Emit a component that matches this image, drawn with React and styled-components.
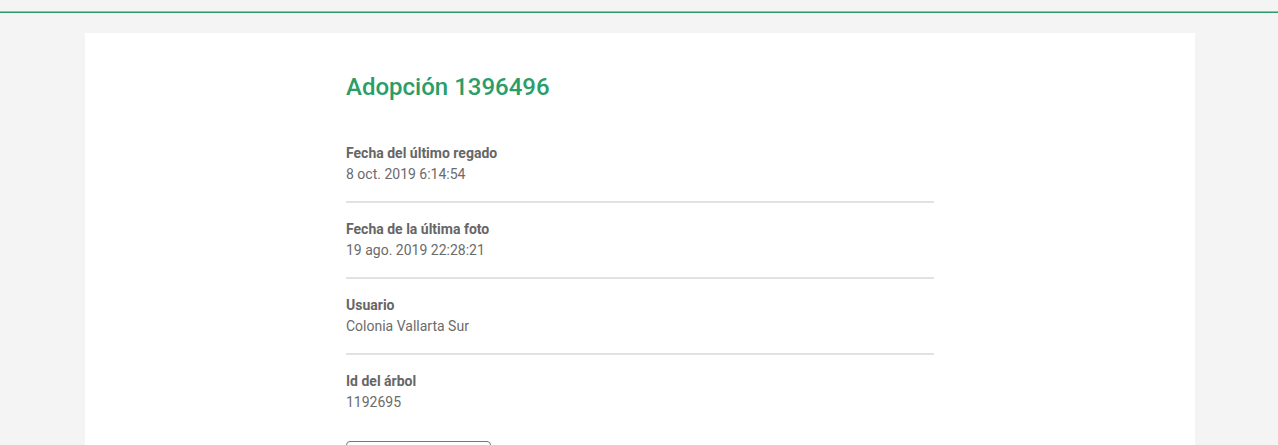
import styled, { createGlobalStyle } from 'styled-components';

const GlobalStyle = createGlobalStyle`
  body {
    margin: 0;
    background: #f4f4f4;
    font-family: Roboto, "Liberation Sans", sans-serif;
  }
`;

const TopBar = styled.div.attrs({ className: 'TopBar' })`
  height: 11px;
  border-bottom: 1px solid #9fb8ab;
  box-shadow: 0 1px 0 #2a9d6a;
  margin-bottom: 21px;
`;

const Page = styled.div.attrs({ className: 'Page' })`
  padding-left: 2px;
`;

const Card = styled.main.attrs({ className: 'Card' })`
  width: 1110px;
  margin: 0 auto;
  background: #ffffff;
  padding: 40px 0 0;
  min-height: 500px;
`;

const Content = styled.div.attrs({ className: 'Content' })`
  width: 588px;
  margin: 0 auto;
`;

const Title = styled.h1.attrs({ className: 'Title' })`
  margin: 0 0 25px;
  font-size: 24px;
  line-height: 29px;
  font-weight: 500;
  color: #2a9d6a;
`;

const Item = styled.div.attrs({ className: 'Item' })`
  padding: 16px 0 17px;
  border-bottom: ${({ $last }) => ($last ? 'none' : '2px solid #e2e2e2')};
`;

const Label = styled.div.attrs({ className: 'Label' })`
  font-size: 14px;
  line-height: 20px;
  font-weight: 700;
  color: #666666;
`;

const Value = styled.div.attrs({ className: 'Value' })`
  margin-top: 1px;
  font-size: 14px;
  line-height: 20px;
  color: #6b6b6b;
`;

const Button = styled.button.attrs({ className: 'Button' })`
  margin-top: 12px;
  width: 145px;
  height: 36px;
  background: #fff;
  border: 1px solid #777;
  border-radius: 4px;
  font-family: inherit;
  font-size: 14px;
  color: #555;
`;

const rows = [
  { label: 'Fecha del último regado', value: '8 oct. 2019 6:14:54' },
  { label: 'Fecha de la última foto', value: '19 ago. 2019 22:28:21' },
  { label: 'Usuario', value: 'Colonia Vallarta Sur' },
  { label: 'Id del árbol', value: '1192695' },
];

export default function App() {
  return (
    <>
      <GlobalStyle />
      <TopBar />
      <Page>
        <Card>
          <Content>
            <Title>Adopción 1396496</Title>
            {rows.map((row, index) => (
              <Item key={row.label} $last={index === rows.length - 1}>
                <Label>{row.label}</Label>
                <Value>{row.value}</Value>
              </Item>
            ))}
            <Button>Ver árbol</Button>
          </Content>
        </Card>
      </Page>
    </>
  );
}
